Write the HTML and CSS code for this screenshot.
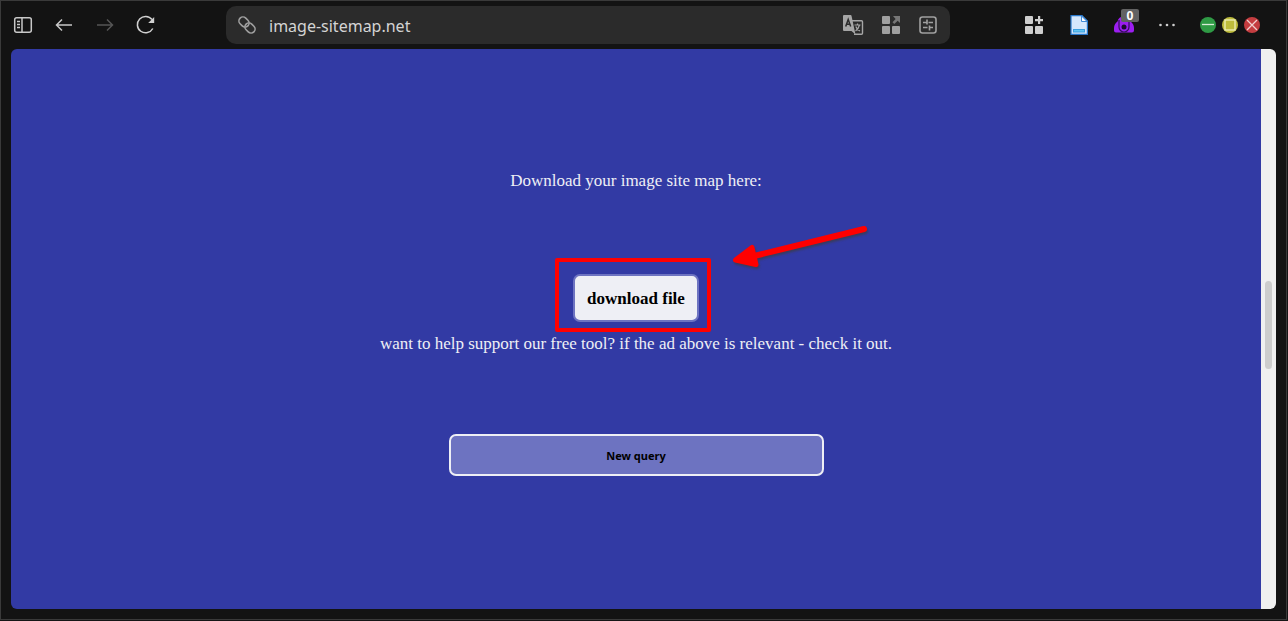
FILE: index.html
```html
<!DOCTYPE html>
<html lang="en">
<head>
    <meta charset="UTF-8">
    <meta name="viewport" content="width=device-width, initial-scale=1.0">
    <title>image-sitemap.net</title>
    <link rel="stylesheet" href="styles.css">
</head>
<body>
    <div class="window">
        <header class="toolbar">
            <div class="nav">
                <button class="icon-button" aria-label="Sidebar">
                    <svg width="20" height="20" viewBox="0 0 20 20" fill="none" stroke="#c8c8c8" stroke-width="1.5">
                        <rect x="1.7" y="2.7" width="16.6" height="14.6" rx="2"/>
                        <path d="M9 3v14M4 6.500h3M4 9.500h3M4 12.500h3"/>
                    </svg>
                </button>
                <button class="icon-button" aria-label="Back">
                    <svg width="20" height="20" viewBox="0 0 20 20" fill="none" stroke="#c8c8c8" stroke-width="1.5">
                        <path d="M18 10H3M8 4.5L2.5 10L8 15.5"/>
                    </svg>
                </button>
                <button class="icon-button" aria-label="Forward" disabled>
                    <svg width="20" height="20" viewBox="0 0 20 20" fill="none" stroke="#555" stroke-width="1.5">
                        <path d="M2 10h15M12 4.5L17.500 10L12 15.500"/>
                    </svg>
                </button>
                <button class="icon-button" aria-label="Reload">
                    <svg width="20" height="20" viewBox="0 0 20 20" fill="none" stroke="#d0d0d0" stroke-width="1.5">
                        <path d="M16.800 13.500A8.200 8.200 0 1 1 16 4.500"/>
                        <path d="M18.200 2v6h-6z" fill="#d0d0d0" stroke="none"/>
                    </svg>
                </button>
            </div>
            <div class="address-bar">
                <svg width="20" height="20" viewBox="0 0 20 20" fill="none" stroke="#a0a0a0" stroke-width="1.6">
                    <rect x="1.500" y="3" width="11" height="8" rx="4" transform="rotate(45 7 7)"/>
                    <rect x="7.500" y="9" width="11" height="8" rx="4" transform="rotate(45 13 13)"/>
                </svg>
                <input class="address" type="text" value="image-sitemap.net" aria-label="Address">
                <div class="address-tools">
                    <button class="icon-button" aria-label="Translate">
                        <svg width="22" height="22" viewBox="0 0 22 22">
                            <path d="M10 6.700h9.500a1 1 0 0 1 1 1v11.600a1 1 0 0 1-1 1H12" fill="none" stroke="#a6a6a6" stroke-width="1.400"/>
                            <path d="M2 1h6.500a1 1 0 0 1 1 .8L13.500 20.500L9.500 17H2a1 1 0 0 1-1-1V2a1 1 0 0 1 1-1z" fill="#a6a6a6"/>
                            <path d="M3.700 12.500L6.200 5.500L8.700 12.500M4.500 10.300h3.400" fill="none" stroke="#2b2b2b" stroke-width="1.500"/>
                            <path d="M12.500 11h6M15.500 9.500V11M17.500 11q-1 4-4 6M13.800 12.500q1.200 3 4.200 4.500" fill="none" stroke="#a6a6a6" stroke-width="1.200"/>
                        </svg>
                    </button>
                    <button class="icon-button" aria-label="Open in workspace">
                        <svg width="20" height="20" viewBox="0 0 20 20" fill="#a0a0a0">
                            <rect x="1" y="1" width="8" height="8" rx="1"/>
                            <rect x="1" y="11" width="8" height="8" rx="1"/>
                            <rect x="11" y="11" width="8" height="8" rx="1"/>
                            <path d="M12 1h7v7l-2.300-2.300L13.300 9L11.500 7.200L14.600 3.900z" fill="#777"/>
                        </svg>
                    </button>
                    <button class="icon-button" aria-label="Site settings">
                        <svg width="20" height="20" viewBox="0 0 20 20" fill="none" stroke="#a0a0a0" stroke-width="1.600">
                            <rect x="2" y="2" width="16" height="16" rx="2.500"/>
                            <path d="M5 7.500h4M9 4.500v5M10.500 7.500H15M5 12.500h4.500M11.500 10.500v5M11.500 12.500H15"/>
                        </svg>
                    </button>
                </div>
            </div>
            <div class="extensions">
                <button class="icon-button" aria-label="Add extension">
                    <svg width="20" height="20" viewBox="0 0 20 20" fill="#cfcfcf">
                        <rect x="1" y="1" width="8" height="8" rx="1"/>
                        <rect x="1" y="11" width="8" height="8" rx="1"/>
                        <rect x="11" y="11" width="8" height="8" rx="1"/>
                        <path d="M14 1h2.200v3H19v2.200h-2.800V9H14V6.200h-3V4h3z"/>
                    </svg>
                </button>
                <button class="icon-button" aria-label="Document">
                    <svg width="20" height="20" viewBox="0 0 20 20">
                        <path d="M2 .6h11L18.400 6v13.400H2z" fill="#d5e7fc" stroke="#2878cc" stroke-width="1.200"/>
                        <path d="M12.500 1v5.500H18z" fill="#fff" stroke="#3f8ad8" stroke-width="1"/>
                        <rect x="4.500" y="14.500" width="11" height="2.500" fill="#63c6f2" stroke="#3c9fe0"/>
                    </svg>
                </button>
                <button class="icon-button" aria-label="Extension, 0 items">
                    <svg width="20" height="20" viewBox="0 0 20 20">
                        <path d="M0 13C0 10 1.500 8 3.500 6.500Q4.500 1.500 10 1.500T16.500 6.500C18.500 8 20 10 20 13v2.500q0 2-2 2H2q-2 0-2-2z" fill="#9b1ef0"/>
                        <path d="M5 5v7a5 5 0 0 0 10 0V5" fill="none" stroke="#35105a" stroke-width="1.200"/>
                        <circle cx="10" cy="12" r="2.500" fill="#1c0b30"/>
                    </svg>
                    <span class="badge">0</span>
                </button>
                <button class="icon-button" aria-label="More">
                    <svg width="16" height="20" viewBox="2 0 16 20" fill="#cfcfcf">
                        <circle cx="3.500" cy="10" r="1.300"/>
                        <circle cx="10" cy="10" r="1.300"/>
                        <circle cx="16.500" cy="10" r="1.300"/>
                    </svg>
                </button>
            </div>
            <div class="window-controls">
                <button class="control minimize" aria-label="Minimize">
                    <svg width="16" height="16" viewBox="0 0 16 16" fill="none" stroke="#d8ead8" stroke-width="1.300"><path d="M2 7.500h12"/></svg>
                </button>
                <button class="control maximize" aria-label="Maximize">
                    <svg width="16" height="16" viewBox="0 0 16 16" fill="none" stroke="#eeeebb" stroke-width="1.300"><rect x="3" y="3" width="10" height="10"/></svg>
                </button>
                <button class="control close" aria-label="Close">
                    <svg width="16" height="16" viewBox="0 0 16 16" fill="none" stroke="#f0d0d0" stroke-width="1.300"><path d="M3 3l10 10M13 3L3 13"/></svg>
                </button>
            </div>
        </header>
        <div class="viewport">
            <main class="page">
                <p>Download your image site map here:</p>
                <div class="download">
                    <button class="download-button">download file</button>
                    <div class="highlight"></div>
                    <svg class="arrow" width="144" height="50" viewBox="0 0 144 50">
                        <path d="M20 33L134 5" stroke="#f00" stroke-width="6" stroke-linecap="round"/>
                        <path d="M5.500 36L22 23.500L26 40.500z" fill="#f00" stroke="#f00" stroke-width="5" stroke-linejoin="round"/>
                    </svg>
                </div>
                <p>want to help support our free tool? if the ad above is relevant - check it out.</p>
                <button class="query-button">New query</button>
            </main>
            <div class="scrollbar">
                <div class="thumb"></div>
            </div>
        </div>
    </div>
</body>
</html>
```

FILE: styles.css
```css
* {
    box-sizing: border-box;
}
body {
    margin: 0;
    padding: 0 1px 1px 0;
    min-height: 100vh;
    display: flex;
    background-color: #151515;
}
button {
    cursor: pointer;
}
p {
    margin: 0;
}
svg {
    display: block;
}
.window {
    flex: 1;
    display: flex;
    flex-direction: column;
    padding: 0 10px 10px;
    border: 1px solid #3a3a3a;
    background-color: #131313;
}
.toolbar {
    height: 48px;
    display: flex;
    align-items: center;
}
.nav {
    display: flex;
    gap: 21px;
    margin: 0 70px 0 2px;
}
.icon-button {
    position: relative;
    padding: 0;
    border: none;
    background: none;
}
.address-bar {
    flex: 1;
    display: flex;
    align-items: center;
    height: 38px;
    padding: 0 12px 0 11px;
    border-radius: 10px;
    background-color: #2b2b2b;
}
.address {
    flex: 1;
    min-width: 0;
    margin-left: 12px;
    padding: 2px 0 0;
    border: none;
    outline: none;
    background: none;
    color: #d4d4d4;
    font: 16px "Noto Sans", "Open Sans", sans-serif;
}
.address-tools {
    display: flex;
    align-items: center;
    gap: 17px;
}
.extensions {
    display: flex;
    gap: 25px;
    margin-left: 74px;
}
.badge {
    position: absolute;
    top: -6px;
    left: 7px;
    width: 18px;
    border-radius: 2px;
    background-color: #626262;
    color: #fff;
    font: bold 12px/13px "Noto Sans", sans-serif;
    text-align: center;
}
.window-controls {
    display: flex;
    gap: 6px;
    margin: 0 16px 0 25px;
}
.control {
    padding: 0;
    border: none;
    border-radius: 50%;
}
.minimize {
    background-color: #2f9a45;
}
.maximize {
    background-color: #bdbb3c;
}
.close {
    background-color: #c43d40;
}
.viewport {
    flex: 1;
    display: flex;
    border-radius: 6px;
    overflow: hidden;
}
.page {
    flex: 1;
    display: flex;
    flex-direction: column;
    align-items: center;
    padding: 122px 0;
    background-color: #323aa4;
    color: #eeeff5;
    font: 17px/20px "Liberation Serif", "Times New Roman", serif;
}
.download {
    position: relative;
    margin: 83px 0 12px;
}
.download-button {
    display: block;
    height: 48px;
    padding: 2px 12px 0;
    border: 2px solid #6d73c1;
    border-radius: 7px;
    background-color: #eeeff5;
    color: #000;
    font: bold 17px "Liberation Serif", "Times New Roman", serif;
}
.highlight {
    position: absolute;
    top: -16px;
    right: -12px;
    bottom: -10px;
    left: -18px;
    border: 4px solid #f00;
    border-radius: 2px;
    pointer-events: none;
}
.arrow {
    position: absolute;
    top: -50px;
    left: 157px;
    filter: drop-shadow(1px 2px 1px rgba(60, 60, 60, 0.7));
    pointer-events: none;
}
.query-button {
    width: 30%;
    height: 42px;
    margin-top: 80px;
    border: 2px solid #eeeff5;
    border-radius: 7px;
    background-color: #6d73c1;
    color: #000;
    font: bold 11px "Noto Sans", Tahoma, sans-serif;
}
.scrollbar {
    display: flex;
    align-items: flex-start;
    justify-content: center;
    width: 15px;
    padding-top: 232px;
    background-color: #f0f0f0;
}
.thumb {
    width: 7px;
    height: 88px;
    border-radius: 4px;
    background-color: #cdcdcd;
}
```
